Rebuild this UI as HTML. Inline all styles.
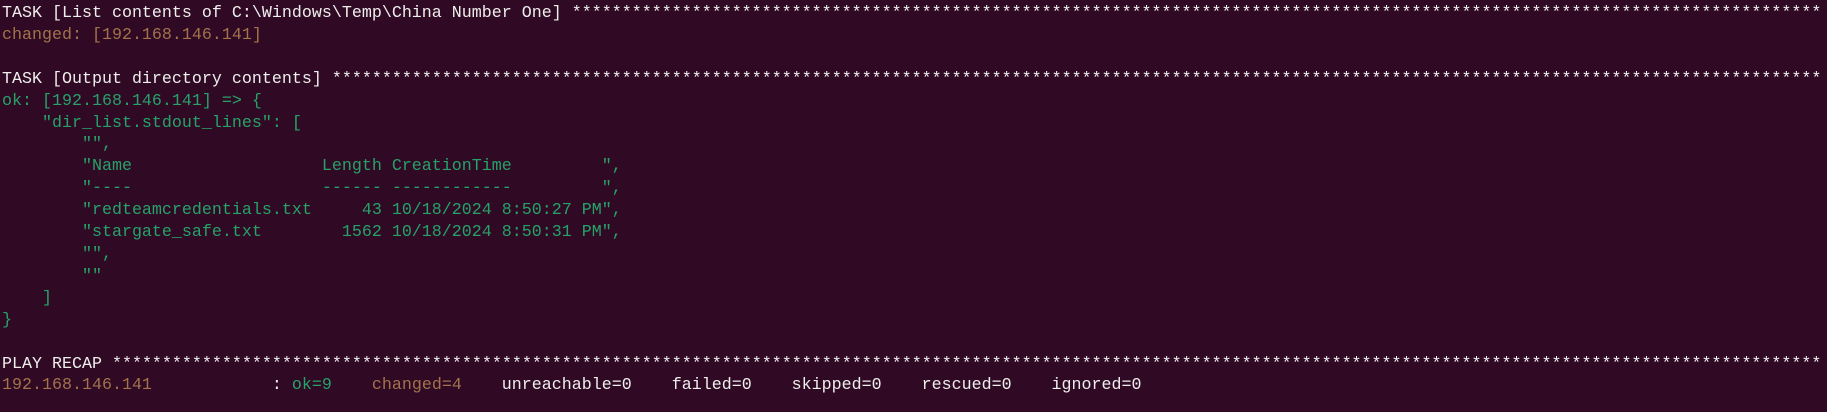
<!DOCTYPE html>
<html><head><meta charset="utf-8"><style>
html,body{margin:0;padding:0;background:#300a24;width:1827px;height:412px;overflow:hidden}
pre{margin:0;padding:3px 0 0 2px;font-family:"Liberation Mono",monospace;font-size:16.667px;line-height:21.9px;color:#eeeeec;white-space:pre}
.g{color:#26a269}.y{color:#a2734c}
</style></head><body><pre>TASK [List contents of C:\Windows\Temp\China Number One] <span>**********</span><span>**********</span><span>**********</span><span>**********</span><span>**********</span><span>**********</span><span>**********</span><span>**********</span><span>**********</span><span>**********</span><span>**********</span><span>**********</span><span>*****</span>
<span class="y">changed: [192.168.146.141]</span>

TASK [Output directory contents] <span>**********</span><span>**********</span><span>**********</span><span>**********</span><span>**********</span><span>**********</span><span>**********</span><span>**********</span><span>**********</span><span>**********</span><span>**********</span><span>**********</span><span>**********</span><span>**********</span><span>*********</span>
<span class="g">ok: [192.168.146.141] =&gt; {
    "dir_list.stdout_lines": [
        "",
        "Name                   Length CreationTime         ",
        "----                   ------ ------------         ",
        "redteamcredentials.txt     43 10/18/2024 8:50:27 PM",
        "stargate_safe.txt        1562 10/18/2024 8:50:31 PM",
        "",
        ""
    ]
}</span>

PLAY RECAP <span>**********</span><span>**********</span><span>**********</span><span>**********</span><span>**********</span><span>**********</span><span>**********</span><span>**********</span><span>**********</span><span>**********</span><span>**********</span><span>**********</span><span>**********</span><span>**********</span><span>**********</span><span>**********</span><span>**********</span><span>*</span>
<span class="y">192.168.146.141           </span> : <span class="g">ok=9   </span> <span class="y">changed=4   </span> unreachable=0    failed=0    skipped=0    rescued=0    ignored=0
</pre></body></html>
